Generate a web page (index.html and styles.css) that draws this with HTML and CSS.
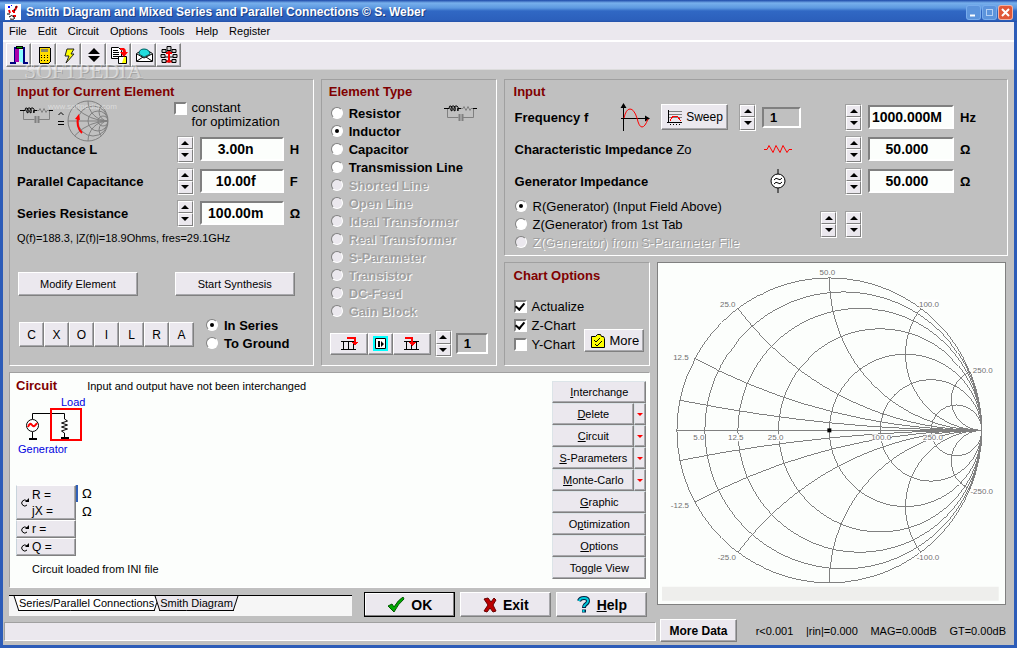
FILE: index.html
```
<!DOCTYPE html>
<html lang="en">
<head>
  <meta charset="UTF-8" />
  <title>Smith Diagram and Mixed Series and Parallel Connections</title>
  <link rel="stylesheet" href="styles.css">
</head>
<body>

<svg class="defs" aria-hidden="true">
  <symbol id="network" viewBox="0 0 33 17">
    <path d="M0 3.500H5M14 3.500h3" stroke="#000" fill="none"/>
    <path d="M5 4q0-4 2-3t1 5q-2 0-1-3t3-2 1 5q-2 0-1-3t3-2 1 5q-1 0 0-3" stroke="#000" stroke-width="1" fill="none"/>
    <path d="M17 3.500h2l1-2 2 4 2-4 2 4 1-2h3M3.500 4v8.500h11M29.500 4v8.500h-11" stroke="#808080" fill="none"/>
    <path d="M29 3.500h4" stroke="#000"/>
    <path d="M15.500 9v7M18.500 9v7" stroke="#808080" stroke-width="2"/>
  </symbol>
</svg>

<div class="window">
  <header class="titlebar">
    <svg class="app-icon" width="16" height="16" viewBox="0 0 16 16">
      <rect width="16" height="16" fill="#fff"/>
      <path d="M3 2h2v2H3zM6 1h1v1H6z" fill="#00f"/>
      <path d="M12 2l-2 4M7 7h2v2M4 6l1 3M8 12h3" stroke="#e00" stroke-width="2" fill="none"/>
      <path d="M2 10h3M10 3h2M4 13q3-3 5 0t-4 2M9 5l1 2" stroke="#000" fill="none"/>
    </svg>
    <h1>Smith Diagram and Mixed Series and Parallel Connections © S. Weber</h1>
    <button class="win-btn" aria-label="Minimize"><svg width="13" height="13"><path d="M3 9.500h5" stroke="#fff" stroke-width="2"/></svg></button>
    <button class="win-btn" aria-label="Maximize"><svg width="13" height="13"><rect x="3.500" y="3.500" width="6" height="6" fill="none" stroke="#b4d0f4"/></svg></button>
    <button class="win-btn close" aria-label="Close"><svg width="13" height="13"><path d="M3 3l7 7M10 3l-7 7" stroke="#fff" stroke-width="2"/></svg></button>
  </header>

  <nav class="menu">
    <a href="#">File</a><a href="#">Edit</a><a href="#">Circuit</a><a href="#">Options</a><a href="#">Tools</a><a href="#">Help</a><a href="#">Register</a>
  </nav>

  <div class="toolbar">
    <button aria-label="Exit"><svg width="20" height="20" viewBox="0 0 20 20" shape-rendering="crispEdges">
      <path d="M1 18h5V3h9v15h4" fill="none" stroke="#000080" stroke-width="2"/>
      <path d="M7 1h6v2H7z" fill="#0a0" stroke="#000"/><path d="M6 4h4v13H6z" fill="#a0a"/><path d="M10 5h4v13l-4-2z" fill="#8ff"/></svg></button>
    <button aria-label="Calculator"><svg width="20" height="20" viewBox="0 0 20 20" shape-rendering="crispEdges">
      <rect x="5" y="2" width="11" height="16" rx="1" fill="#fd0" stroke="#000"/><path d="M7 4h7v3H7z" fill="#886"/>
      <path d="M7 10h7M7 12.500h7M7 15h7" stroke="#000" stroke-dasharray="1 2"/></svg></button>
    <button aria-label="Lightning"><svg width="20" height="20" viewBox="0 0 20 20"><path d="M8 4h7l-3 5h3l-8 9 3-7H6z" fill="#ff0" stroke="#222"/></svg></button>
    <button aria-label="Up and down"><svg width="20" height="20"><path d="M10 3l6 6H4zM4 11h12l-6 6z"/></svg></button>
    <button aria-label="Copy data"><svg width="20" height="20" viewBox="0 0 20 20">
      <path d="M2.500 2.500h7l3 3v8h-10z" fill="#fff" stroke="#000"/><path d="M4 5.500h5M4 7.500h6M4 9.500h6M4 11.500h6" stroke="#000"/>
      <path d="M9.500 11.500h8v7h-8z" fill="#fff" stroke="#000"/><path d="M15 12h2v6h-4z" fill="#ff0"/><path d="M11 3h4q2 1 2 4h2l-4 5-4-5h3q0-3-3-2z" fill="#f00"/></svg></button>
    <button aria-label="Mail"><svg width="20" height="20" viewBox="0 0 20 20">
      <path d="M2.500 8.500l7-4h2l7 4v8h-16z" fill="#fff" stroke="#000"/><path d="M5 9q0-5 5-5t6 5l-6 3z" fill="#2dd" stroke="#066"/><path d="M3 9l7 4 8-4M3 16l6-4M18 16l-6-4" stroke="#000" fill="none"/></svg></button>
    <button aria-label="Network"><svg width="20" height="20" viewBox="0 0 20 20">
      <path d="M10 6v12M5 7h10M4 12h12M4 16h12" stroke="#000"/><path d="M10 6v11M7 16.500h6M7 8h6" stroke="#f00" stroke-width="2"/>
      <g fill="#ccc" stroke="#000"><path d="M8 1.500h4v4H8zM3 4.500h4v3H3zM13 4.500h4v3h-4zM2 9.500h4v3H2zM14 9.500h4v3h-4zM3 14.500h4v3H3zM13 14.500h4v3h-4z"/></g></svg></button>
  </div>

  <div class="watermark" aria-hidden="true">SOFTPEDIA<small>www.softpedia.com</small></div>

  <main class="panels">

    <section class="panel current">
      <h2>Input for Current Element</h2>
      <div class="preview">
        <svg width="33" height="17"><use href="#network"/></svg>
        <svg width="8" height="20"><path d="M1.500 8L4 5.500 6.500 8M1 14.500h6M1 17.500h6" fill="none" stroke="#000"/></svg>
        <svg class="mini" width="42" height="42" viewBox="-21 -21 42 42">
          <clipPath id="miniClip"><circle r="20"/></clipPath>
          <g clip-path="url(#miniClip)" fill="none" stroke="#808080">
            <path d="M-20 0h40"/>
            <circle cx="5" r="15"/><circle cx="10" r="10"/><circle cx="15" r="5"/>
            <circle cx="20" cy="20" r="20"/><circle cx="20" cy="-20" r="20"/>
            <circle cx="20" cy="45" r="45"/><circle cx="20" cy="-45" r="45"/>
            <circle cx="20" cy="9" r="9"/><circle cx="20" cy="-9" r="9"/>
          </g>
          <circle r="20" fill="none" stroke="#808080"/>
          <path d="M-6 12q-6-6-4-15" fill="none" stroke="#f00" stroke-width="2"/>
          <path d="M-13-2l4-5 1 6z" fill="#f00"/>
        </svg>
        <label class="check-label"><input type="checkbox"><span>constant<br>for optimization</span></label>
      </div>
      <div class="field-row">
        <label for="inductance">Inductance L</label>
        <span class="spin"><button aria-label="Up"></button><button aria-label="Down"></button></span>
        <input id="inductance" type="text" value="3.00n"><span>H</span>
      </div>
      <div class="field-row">
        <label for="capacitance">Parallel Capacitance</label>
        <span class="spin"><button aria-label="Up"></button><button aria-label="Down"></button></span>
        <input id="capacitance" type="text" value="10.00f"><span>F</span>
      </div>
      <div class="field-row">
        <label for="resistance">Series Resistance</label>
        <span class="spin"><button aria-label="Up"></button><button aria-label="Down"></button></span>
        <input id="resistance" type="text" value="100.00m"><span>Ω</span>
      </div>
      <p class="note">Q(f)=188.3, |Z(f)|=18.9Ohms, fres=29.1GHz</p>
      <div class="actions">
        <button class="btn">Modify Element</button>
        <button class="btn">Start Synthesis</button>
      </div>
      <div class="connect">
        <div class="keys">
          <button class="btn">C</button><button class="btn">X</button><button class="btn">O</button><button class="btn">I</button><button class="btn">L</button><button class="btn">R</button><button class="btn">A</button>
        </div>
        <div class="radios bold">
          <label><input type="radio" name="connect" checked>In Series</label>
          <label><input type="radio" name="connect">To Ground</label>
        </div>
      </div>
    </section>

    <section class="panel element">
      <h2>Element Type</h2>
      <div class="radios bold">
        <div class="with-icon">
          <label><input type="radio" name="type">Resistor</label>
          <svg width="33" height="17"><use href="#network"/></svg>
        </div>
        <label><input type="radio" name="type" checked>Inductor</label>
        <label><input type="radio" name="type">Capacitor</label>
        <label><input type="radio" name="type">Transmission Line</label>
        <label class="off"><input type="radio" name="type" disabled>Shorted Line</label>
        <label class="off"><input type="radio" name="type" disabled>Open Line</label>
        <label class="off"><input type="radio" name="type" disabled>Ideal Transformer</label>
        <label class="off"><input type="radio" name="type" disabled>Real Transformer</label>
        <label class="off"><input type="radio" name="type" disabled>S-Parameter</label>
        <label class="off"><input type="radio" name="type" disabled>Transistor</label>
        <label class="off"><input type="radio" name="type" disabled>DC-Feed</label>
        <label class="off"><input type="radio" name="type" disabled>Gain Block</label>
      </div>
      <div class="position">
        <button class="btn wide" aria-label="Insert at end"><svg width="18" height="15" shape-rendering="crispEdges"><path d="M1 5.500h15M1 13.500h15M3.500 5v8M8.500 5v8M13.500 5v8" stroke="#000"/><path d="M7 1.500h8v6" stroke="#f00" stroke-width="2" fill="none"/><path d="M11 6h7l-3 4z" fill="#f00"/></svg></button>
        <button class="btn" aria-label="Step"><svg width="15" height="15"><path d="M1 1h13v13H1z" fill="#fff" stroke="#0ff" stroke-width="2"/><path d="M2.500 2.500h10v10h-10z" fill="none" stroke="#000"/><path d="M5 5h2v6H5zM8 5l3 3-3 3z"/></svg></button>
        <button class="btn wide" aria-label="Insert in the middle"><svg width="18" height="15" shape-rendering="crispEdges"><path d="M1 5.500h15M1 13.500h15M3.500 5v8M8.500 5v8M13.500 5v8" stroke="#000"/><path d="M2 1.500h7v6" stroke="#f00" stroke-width="2" fill="none"/><path d="M6 6h7l-4 4z" fill="#f00"/></svg></button>
        <span class="spin"><button aria-label="Up"></button><button aria-label="Down"></button></span>
        <input type="text" class="gray" value="1" aria-label="Position" readonly>
      </div>
    </section>

    <section class="panel source">
      <h2>Input</h2>
      <div class="source-row">
        <label for="freq">Frequency f</label>
        <svg class="sine" width="30" height="30"><path d="M3.500 3v26M1 16.500h26" stroke="#000"/><path d="M3.500 1l3 5h-6zM30 16.500l-5-3v6z"/><path d="M4 16Q6 7 10 7t7 9q2 9 5 9t6-8" fill="none" stroke="#f00"/></svg>
        <button class="btn sweep"><svg width="17" height="17" shape-rendering="crispEdges"><path d="M2 2.500h14M2 5.500h14M2 8.500h14" stroke="#808080"/><path d="M2.500 1v13M1 13.500h15" stroke="#000"/><path d="M4 15.500h12" stroke="#000" stroke-dasharray="1 2"/><path d="M4 12l3-5h4l4 5" fill="none" stroke="#f00"/></svg>Sweep</button>
        <span class="spin"><button aria-label="Up"></button><button aria-label="Down"></button></span>
        <input type="text" class="gray slot" value="1" aria-label="Sweep number" readonly>
        <span class="spin"><button aria-label="Up"></button><button aria-label="Down"></button></span>
        <input id="freq" class="value" type="text" value="1000.000M"><span class="unit">Hz</span>
      </div>
      <div class="source-row">
        <label for="charz">Characteristic Impedance <span class="thin">Zo</span></label>
        <span class="glyph"><svg width="28" height="10"><path d="M0 5.500h3l2-4 4 7 3-7 4 7 3-7 4 7 2-3h3" fill="none" stroke="#f00"/></svg></span>
        <span class="spin"><button aria-label="Up"></button><button aria-label="Down"></button></span>
        <input id="charz" class="value" type="text" value="50.000"><span class="unit">Ω</span>
      </div>
      <div class="source-row">
        <label for="genz">Generator Impedance</label>
        <span class="glyph"><svg width="16" height="24"><path d="M8 0v24" stroke="#000"/><circle cx="8" cy="12" r="7" fill="#fff" stroke="#000"/><path d="M4 11q2-3 4-1t4-1M4 15q2-3 4-1t4-1" fill="none" stroke="#000"/></svg></span>
        <span class="spin"><button aria-label="Up"></button><button aria-label="Down"></button></span>
        <input id="genz" class="value" type="text" value="50.000"><span class="unit">Ω</span>
      </div>
      <div class="generator">
        <div class="radios">
          <label><input type="radio" name="gen" checked>R(Generator) (Input Field Above)</label>
          <label><input type="radio" name="gen">Z(Generator) from 1st Tab</label>
          <label class="off"><input type="radio" name="gen" disabled>Z(Generator) from S-Parameter File</label>
        </div>
        <span class="spin"><button aria-label="Up"></button><button aria-label="Down"></button></span>
        <span class="spin"><button aria-label="Up"></button><button aria-label="Down"></button></span>
      </div>
    </section>

    <section class="panel options">
      <h2>Chart Options</h2>
      <div class="option-body">
        <div class="checks">
          <label><input type="checkbox" checked>Actualize</label>
          <label><input type="checkbox" checked>Z-Chart</label>
          <label><input type="checkbox">Y-Chart</label>
        </div>
        <button class="btn more"><svg width="16" height="16"><path d="M1.500 3.500h4l2-2h3l1 2h2l1 2v9h-13z" fill="#ff0" stroke="#000"/><path d="M4 7l2 2 4-4M5 11l2 2 5-5" fill="none" stroke="#000"/></svg>More</button>
      </div>
    </section>

    <section class="chart">
      <svg viewBox="0 0 348 341" role="img" aria-label="Smith chart">
        <clipPath id="unit"><circle r="153"/></clipPath>
        <g transform="translate(172 168)">
          <g clip-path="url(#unit)" class="lines">
            <path d="M-153 0H153"/>
            <circle cx="14" r="139"/><circle cx="30.600" r="122.400"/><circle cx="51" r="102"/>
            <circle cx="76.500" r="76.500"/><circle cx="102" r="51"/><circle cx="127.500" r="25.500"/>
            <circle cx="153" cy="1530" r="1530"/><circle cx="153" cy="-1530" r="1530"/>
            <circle cx="153" cy="612" r="612"/><circle cx="153" cy="-612" r="612"/>
            <circle cx="153" cy="306" r="306"/><circle cx="153" cy="-306" r="306"/>
            <circle cx="153" cy="153" r="153"/><circle cx="153" cy="-153" r="153"/>
            <circle cx="153" cy="76.500" r="76.500"/><circle cx="153" cy="-76.500" r="76.500"/>
            <circle cx="153" cy="30.600" r="30.600"/><circle cx="153" cy="-30.600" r="30.600"/>
          </g>
          <circle r="153" class="lines"/>
          <g fill="#fff"><path d="M-136 4h11v7h-11zM-102 4h15v7h-15zM-61 4h15v7h-15zM43 4h18v7H43zM95 4h18v7H95zM90-131h20v8H90zM145-65h18v8h-18zM143 57h20v8h-20zM90 123h20v8H90z"/></g>
          <g class="labels">
            <text x="-2" y="-156">50.0</text>
            <text x="-102" y="-124">25.0</text><text x="100" y="-124">100.0</text>
            <text x="-149" y="-71">12.5</text><text x="154" y="-58">250.0</text>
            <text x="-131" y="10">5.0</text><text x="-94" y="10">12.5</text><text x="-54" y="10">25.0</text>
            <text x="52" y="10">100.0</text><text x="104" y="10">250.0</text>
            <text x="-150" y="78">-12.5</text><text x="153" y="64">-250.0</text>
            <text x="-103" y="130">-25.0</text><text x="99" y="130">-100.0</text>
          </g>
          <path d="M-2-2h4v4h-4z"/>
        </g>
        <path d="M4 325h338v14H4z" fill="#eeeeec"/>
      </svg>
    </section>

    <section class="circuit">
      <div class="circuit-main">
        <div class="circuit-head"><h2>Circuit</h2><span>Input and output have not been interchanged</span></div>
        <svg class="schematic" width="80" height="60">
          <text x="45" y="11">Load</text><text x="2" y="58">Generator</text>
          <path d="M16.500 24v-5.500h32V24M16.500 37v6M48.500 38v5" fill="none" stroke="#000"/>
          <path d="M13 43h8v2h-8zM45 42h8v2h-8z"/>
          <circle cx="16.500" cy="30.500" r="6" fill="#fff" stroke="#000"/>
          <path d="M12 32q2-5 4-2t5-2" fill="none" stroke="#f00" stroke-width="2"/>
          <path d="M48.500 24l3 2-6 2 6 2-6 2 6 2-6 2 3 2" fill="none" stroke="#000"/>
          <path d="M35 14h30v31H35z" fill="none" stroke="#f00" stroke-width="2"/>
        </svg>
        <div class="readout">
          <div class="readout-keys">
            <button class="btn tall"><svg width="9" height="9"><path d="M7 3a3 3 0 1 0 0 4" fill="none" stroke="#000"/><path d="M5 4h4V0z"/></svg><span>R =<br>jX =</span></button>
            <button class="btn"><svg width="9" height="9"><path d="M7 3a3 3 0 1 0 0 4" fill="none" stroke="#000"/><path d="M5 4h4V0z"/></svg><span>r =</span></button>
            <button class="btn"><svg width="9" height="9"><path d="M7 3a3 3 0 1 0 0 4" fill="none" stroke="#000"/><path d="M5 4h4V0z"/></svg><span>Q =</span></button>
          </div>
          <i class="marker"></i>
          <div class="ohms">Ω<br>Ω</div>
        </div>
        <p>Circuit loaded from INI file</p>
      </div>
      <div class="commands">
        <div><button class="btn"><span><u>I</u>nterchange</span></button></div>
        <div><button class="btn"><span><u>D</u>elete</span></button><button class="btn drop" aria-label="Delete options"></button></div>
        <div><button class="btn"><span><u>C</u>ircuit</span></button><button class="btn drop" aria-label="Circuit options"></button></div>
        <div><button class="btn"><span><u>S</u>-Parameters</span></button><button class="btn drop" aria-label="S-Parameters options"></button></div>
        <div><button class="btn"><span><u>M</u>onte-Carlo</span></button><button class="btn drop" aria-label="Monte-Carlo options"></button></div>
        <div><button class="btn"><span><u>G</u>raphic</span></button></div>
        <div><button class="btn"><span>O<u>p</u>timization</span></button></div>
        <div><button class="btn"><span><u>O</u>ptions</span></button></div>
        <div><button class="btn">Toggle View</button></div>
      </div>
    </section>

    <div class="bottom">
      <div class="tabs">
        <button class="tab active">Series/Parallel Connections</button>
        <button class="tab">Smith Diagram</button>
      </div>
      <button class="btn big default"><svg width="18" height="16"><path d="M1 9l4-2 2 3q4-7 9-10l1 2Q11 7 7 15z" fill="#0a0" stroke="#050"/></svg>OK</button>
      <button class="btn big"><svg width="14" height="16"><path d="M1 2l4-1 3 4 3-4 2 2-3 5 3 6-3 1-3-4-3 4-3-1 4-6z" fill="#b00" stroke="#600"/></svg>Exit</button>
      <button class="btn big"><svg width="14" height="17"><path d="M2 5q1-3 5-3 4 0 4 3 0 2-3 4-1 1-1 3M7 13.500v3" fill="none" stroke="#024" stroke-width="4"/><path d="M2 5q1-3 5-3 4 0 4 3 0 2-3 4-1 1-1 2M6.500 14v2" fill="none" stroke="#0cd" stroke-width="2"/></svg><span><u>H</u>elp</span></button>
    </div>
  </main>

  <footer class="status">
    <div class="status-line"></div>
    <div class="status-data">
      <button class="btn">More Data</button>
      <span>r&lt;0.001</span><span>|rin|=0.000</span><span>MAG=0.00dB</span><span>GT=0.00dB</span>
    </div>
  </footer>
</div>

</body>
</html>
```
FILE: styles.css
```
* {
  box-sizing: border-box;
}
body {
  margin: 0;
  font-family: "Liberation Sans", Arial, sans-serif;
  font-size: 11px;
  color: #000;
  background: #c0c0c0;
}
button, input {
  font: inherit;
  color: inherit;
  margin: 0;
}
button {
  padding: 0;
}
svg {
  display: block;
  flex: none;
}
.defs {
  position: absolute;
  width: 0;
  height: 0;
}
.window {
  position: relative;
  min-height: 100vh;
  border: 3px solid #2c5cb8;
  border-top-width: 0;
  background: #c0c0c0;
}

/* title, menu, toolbar */
.titlebar {
  display: flex;
  align-items: center;
  gap: 3px;
  height: 22px;
  margin: 0 -3px;
  padding: 2px 5px 0;
  background: linear-gradient(#1c48a8, #78b0ec 3px, #5c98e0 8px, #3068c4 11px, #2c60bc 20px, #2450a8);
}
.titlebar h1 {
  flex: 1;
  margin: 0 0 0 2px;
  font-size: 12px;
  font-weight: bold;
  color: #fff;
  text-shadow: 1px 1px #1c3c80;
}
.win-btn {
  width: 13px;
  height: 13px;
  border: 0;
  border-radius: 2px;
  background: #5c94dc;
  box-shadow: 0 0 0 1px #78acec;
}
.win-btn.close {
  background: #e05838;
  box-shadow: 0 0 0 1px #f4b0a0;
}
.menu {
  display: flex;
  gap: 11px;
  height: 19px;
  padding: 3px 6px;
  background: #ebe8ee;
  border-bottom: 1px solid #fff;
}
.menu a {
  color: #000;
  text-decoration: none;
}
.toolbar {
  display: flex;
  height: 29px;
  padding: 1px 3px 2px;
  border-top: 1px solid #fff;
  border-bottom: 1px solid #dcdcdc;
  background: #ebe8ee;
}
.toolbar button,
.btn {
  display: flex;
  justify-content: center;
  align-items: center;
  background: #ebe8ee;
  border: 1px solid;
  border-color: #fff #808080 #808080 #fff;
  box-shadow: inset -1px -1px #a8a8ac;
}
.toolbar button {
  width: 25px;
}
.watermark {
  position: absolute;
  left: 21px;
  top: 58px;
  font: 22px "Liberation Serif", serif;
  color: rgba(255, 255, 255, 0.45);
  text-shadow: 1px 1px rgba(120, 120, 120, 0.4);
  pointer-events: none;
}
.watermark small {
  display: block;
  margin: 18px 0 0 24px;
  font: 8px "Liberation Sans", sans-serif;
  text-shadow: none;
}

/* panels */
.panels {
  display: grid;
  grid-template-columns: 305fr 176fr 146fr 351fr;
  grid-template-rows: auto 1fr auto auto;
  column-gap: 7px;
  padding: 9px 6px 0;
}
.panel {
  margin-bottom: 6px;
  padding: 3px 7px;
  border: 1px solid;
  border-color: #a0a0a0 #fff #fff #a0a0a0;
}
.current {
  grid-row: 1 / 3;
}
.element {
  grid-row: 1 / 3;
}
.source {
  grid-column: 3 / 5;
  padding-left: 9px;
}
.options {
  grid-column: 3;
  padding-left: 9px;
}
.chart {
  grid-column: 4;
  grid-row: 2 / 5;
}
.circuit {
  grid-column: 1 / 4;
  grid-row: 3;
}
.bottom {
  grid-column: 1 / 4;
  grid-row: 4;
}
h2 {
  margin: 0;
  font-size: 13px;
  line-height: 18px;
  color: #800000;
}

/* controls */
input[type="text"] {
  width: 100%;
  min-width: 0;
  height: 24px;
  padding: 0 12px 0 0;
  border: 2px solid;
  border-color: #808080 #fff #fff #808080;
  background: #fcfefc;
  font-size: 14px;
  font-weight: bold;
  text-align: center;
}
input.value[type="text"] {
  padding-right: 8px;
}
input.gray[type="text"] {
  height: 21px;
  padding: 0 0 0 6px;
  background: #c0c0c0;
  font-size: 13px;
  text-align: left;
}
input[type="radio"],
input[type="checkbox"] {
  appearance: none;
  flex: none;
  display: grid;
  place-items: center;
  width: 13px;
  height: 13px;
  border: 2px solid;
  border-color: #808080 #fff #fff #808080;
  background: #fff;
}
input[type="radio"] {
  width: 12px;
  height: 12px;
  border-width: 1px;
  border-radius: 50%;
}
input[type="radio"]:disabled {
  background: #ebe8ee;
}
input[type="radio"]:checked::before {
  content: "";
  width: 4px;
  height: 4px;
  border-radius: 50%;
  background: #000;
}
input[type="checkbox"]:checked::before {
  content: "";
  width: 4px;
  height: 7px;
  margin-top: -2px;
  border: solid #000;
  border-width: 0 2px 2px 0;
  transform: rotate(40deg);
}
.spin {
  display: flex;
  flex-direction: column;
  flex: none;
  width: 17px;
  height: 27px;
  border: 1px solid;
  border-color: #a0a0a0 #fff #fff #a0a0a0;
}
.spin button {
  flex: 1;
  display: grid;
  place-items: center;
  border: 1px solid;
  border-color: #fff #808080 #808080 #fff;
  background: #ebe8ee;
}
.spin button::before {
  content: "";
  border: 4px solid transparent;
  border-top: 0;
  border-bottom: 4px solid #000;
}
.spin button:last-child::before {
  border-top: 4px solid #000;
  border-bottom: 0;
}
.radios label,
.checks label {
  display: flex;
  align-items: center;
  gap: 6px;
  height: 18px;
  font-size: 13px;
  white-space: nowrap;
}
.bold label {
  font-weight: bold;
}
.off {
  color: #a0a0a0;
  text-shadow: 1px 1px #fff;
}

/* current element */
.preview {
  display: flex;
  align-items: flex-start;
  height: 32px;
  padding-left: 3px;
}
.preview svg {
  margin: 6px 4px 0 0;
}
.preview .mini {
  margin: -1px 0 0 -2px;
}
.check-label {
  display: flex;
  gap: 5px;
  margin: 0 26px 0 auto;
  font-size: 13px;
  line-height: 14px;
  white-space: nowrap;
}
.check-label input {
  margin-top: 1px;
}
.field-row {
  display: grid;
  grid-template-columns: 1fr 17px 84px 16px;
  align-items: center;
  gap: 6px;
  height: 32px;
  font-size: 13px;
  font-weight: bold;
}
.note {
  margin: 0;
  line-height: 18px;
}
.actions {
  display: flex;
  justify-content: space-between;
  margin: 25px 11px 0 1px;
}
.actions .btn {
  width: 120px;
  height: 24px;
}
.connect {
  display: flex;
  align-items: flex-start;
  gap: 12px;
  margin: 20px 0 10px 2px;
}
.keys {
  display: flex;
  margin-top: 6px;
}
.keys .btn {
  width: 25px;
  height: 25px;
  font-size: 12px;
}

/* element type */
.element .radios {
  margin: 3px 0 0 2px;
}
.with-icon {
  display: flex;
  justify-content: space-between;
  align-items: center;
  height: 18px;
  padding-right: 12px;
}
.position {
  display: flex;
  align-items: center;
  margin: 10px 0 0 1px;
}
.position .btn {
  width: 25px;
  height: 22px;
}
.position .wide {
  width: 38px;
}
.position .spin {
  margin: 0 4px;
}
.position .gray {
  width: 32px;
}

/* source */
.source-row {
  display: flex;
  align-items: center;
  gap: 6px;
  height: 32px;
  padding-left: 1px;
  font-size: 13px;
  font-weight: bold;
}
.source-row label {
  flex: 1;
  white-space: nowrap;
}
.thin {
  font-weight: normal;
}
.source-row .slot {
  flex: none;
  width: 39px;
  margin-right: 38px;
}
.glyph {
  display: grid;
  justify-items: center;
  width: 39px;
  margin-right: 42px;
}
.source-row .value {
  flex: none;
  width: 86px;
}
.unit {
  width: 40px;
}
.sweep {
  width: 67px;
  height: 26px;
  margin: 0 5px 0 5px;
  gap: 3px;
  font-size: 12px;
  font-weight: normal;
}
.generator {
  display: flex;
  align-items: center;
  gap: 8px;
  padding: 0 138px 1px 1px;
}
.generator .radios {
  flex: 1;
}

/* chart options */
.options h2 {
  padding-top: 1px;
}
.option-body {
  display: flex;
  justify-content: space-between;
  align-items: flex-end;
  margin: 12px -2px 6px 0;
}
.checks label {
  height: 19px;
  gap: 5px;
}
.more {
  width: 60px;
  height: 23px;
  margin-bottom: 2px;
  gap: 4px;
  font-size: 13px;
}

/* chart */
.chart {
  margin: 0 2px 12px 0;
  border: 1px solid #808080;
  background: #fcfefc;
}
.chart svg {
  width: 100%;
}
.lines {
  fill: none;
  stroke: #808080;
  shape-rendering: crispEdges;
}
.labels {
  fill: #707070;
  font-size: 8px;
  text-anchor: middle;
}

/* circuit */
.circuit {
  display: flex;
  justify-content: space-between;
  margin-bottom: 4px;
  padding: 4px 3px 8px 6px;
  border: 1px solid;
  border-color: #a0a0a0 #fff #fff #a0a0a0;
  background: #fcfefc;
}
.circuit-head {
  display: flex;
  align-items: center;
  gap: 30px;
}
.schematic text {
  fill: #0000e0;
  font-size: 11px;
}
.readout {
  display: flex;
  margin-top: 30px;
}
.readout-keys {
  width: 60px;
}
.readout .btn {
  width: 100%;
  height: 18px;
  padding-left: 3px;
  gap: 3px;
  justify-content: flex-start;
  border-left-color: #c8d4dc;
  font-size: 12px;
  text-align: left;
}
.readout .tall {
  height: 35px;
  line-height: 16px;
}
.marker {
  width: 2px;
  height: 17px;
  background: #3060b8;
}
.ohms {
  margin-left: 4px;
  font-size: 13px;
  line-height: 18px;
}
.circuit-main p {
  margin: 7px 0 0 16px;
}
.commands {
  width: 94px;
  padding-top: 4px;
}
.commands div {
  display: flex;
  height: 22px;
}
.commands .btn {
  flex: 1;
  border-color: #dce4e8 #808080 #808080 #dce4e8;
}
.commands .drop {
  flex: none;
  width: 12px;
}
.drop::before {
  content: "";
  border: 3px solid transparent;
  border-top: 3px solid #f00;
  border-bottom: 0;
}

/* bottom */
.bottom {
  display: flex;
  gap: 5px;
  padding-right: 3px;
}
.tabs {
  display: flex;
  flex: 1;
  align-items: flex-start;
  height: 21px;
  margin: 3px 7px 0 0;
  padding-left: 10px;
  border-top: 1px solid #000;
  background: #f6f6f6;
}
.tab {
  position: relative;
  z-index: 0;
  height: 15px;
  margin-right: 6px;
  padding: 0 0 1px;
  border: 0;
  background: none;
  white-space: nowrap;
}
.tab::before,
.tab::after {
  content: "";
  position: absolute;
  z-index: -1;
  top: 0;
  bottom: 0;
  left: -3px;
  right: 40%;
  border: solid #000;
  border-width: 0 0 1px 1px;
  background: #ebe8ee;
  transform: skewX(18deg);
}
.tab::after {
  left: 40%;
  right: -3px;
  border-width: 0 1px 1px 0;
  transform: skewX(-18deg);
}
.tab.active::before,
.tab.active::after {
  background: #fff;
}
.big {
  width: 91px;
  height: 25px;
  gap: 6px;
  font-size: 14px;
  font-weight: bold;
}
.big.default {
  border-color: #000;
  box-shadow: inset -1px -1px #808080, inset 1px 1px #fff;
}
.status {
  display: grid;
  grid-template-columns: 652fr 352fr;
  align-items: center;
  gap: 4px;
  margin-top: 2px;
  padding: 0 2px 2px 1px;
}
.status-line {
  height: 19px;
  margin-top: 2px;
  border: 1px solid;
  border-color: #a0a0a0 #fff #fff #a0a0a0;
  background: #ebe8ee;
}
.status-data {
  display: flex;
  align-items: center;
  justify-content: space-between;
  padding-right: 6px;
}
.status-data .btn {
  width: 77px;
  height: 23px;
  margin-right: 6px;
  font-size: 12px;
  font-weight: bold;
}
```
